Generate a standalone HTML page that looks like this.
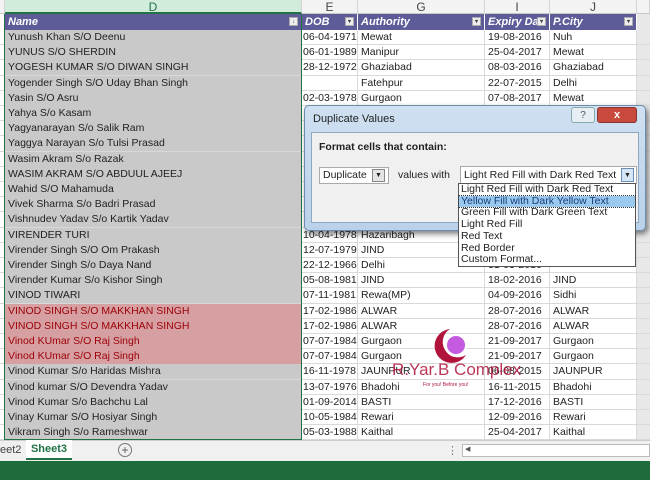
<!DOCTYPE html>
<html><head><meta charset="utf-8"><style>
*{margin:0;padding:0;box-sizing:border-box}
body{width:650px;height:480px;overflow:hidden;background:#fff;font-family:"Liberation Sans",sans-serif;font-size:10.5px;color:#222;position:relative}
.colh{position:absolute;top:0;height:14px;background:#f3f3f3;border-right:1px solid #d4d4d4;border-bottom:1px solid #c8c8c8;text-align:center;font-size:12px;line-height:14px;color:#444}
.hdr{position:absolute;top:14px;height:16px;background:#5d5c99;color:#fff;font-weight:bold;font-style:italic;font-size:11px;line-height:16px;padding-left:3px;border-right:1px solid #fff}
.dd{position:absolute;top:3px;right:3px;width:9px;height:9px;background:#eee;border:1px solid #aaa;font-size:6px;color:#444;line-height:8px;text-align:center;font-style:normal}
.row{position:absolute;left:0;width:650px;height:15.2px;line-height:15px;border-bottom:1px solid #d9d9d9}
.row div{position:absolute;top:0;height:15px;padding-left:3px;white-space:nowrap;overflow:hidden;border-right:1px solid #d9d9d9}
.d{left:5px;width:297px;background:#c9c9c9}
.red .d{background:#d6a0a3;color:#9c0006}
.e{left:302px;width:56px;padding-left:1px!important}
.g{left:358px;width:127px}
.i{left:485px;width:65px}
.j{left:550px;width:87px}
</style></head><body>
<div class="colh" style="left:0;width:5px"></div>
<div class="colh" style="left:5px;width:297px;background:#d2ecdc;color:#217346;border-bottom:2px solid #217346">D</div>
<div class="colh" style="left:302px;width:56px">E</div>
<div class="colh" style="left:358px;width:127px">G</div>
<div class="colh" style="left:485px;width:65px">I</div>
<div class="colh" style="left:550px;width:87px">J</div>
<div class="colh" style="left:637px;width:13px"></div>
<div class="hdr" style="left:5px;width:297px">Name<span class="dd">↓</span></div>
<div class="hdr" style="left:302px;width:56px">DOB<span class="dd">▾</span></div>
<div class="hdr" style="left:358px;width:127px">Authority<span class="dd">▾</span></div>
<div class="hdr" style="left:485px;width:65px">Expiry Da<span class="dd">▾</span></div>
<div class="hdr" style="left:550px;width:87px">P.City<span class="dd">▾</span></div>
<div style="position:absolute;left:637px;top:14px;width:13px;height:426px;background:#e8e8e8"></div>

<div class="row" style="top:30px"><div class="d">Yunush Khan S/O Deenu</div><div class="e">06-04-1971</div><div class="g">Mewat</div><div class="i">19-08-2016</div><div class="j">Nuh</div></div>
<div class="row" style="top:45.2px"><div class="d">YUNUS S/O SHERDIN</div><div class="e">06-01-1989</div><div class="g">Manipur</div><div class="i">25-04-2017</div><div class="j">Mewat</div></div>
<div class="row" style="top:60.4px"><div class="d">YOGESH KUMAR S/O DIWAN SINGH</div><div class="e">28-12-1972</div><div class="g">Ghaziabad</div><div class="i">08-03-2016</div><div class="j">Ghaziabad</div></div>
<div class="row" style="top:75.6px"><div class="d">Yogender Singh S/O Uday Bhan Singh</div><div class="e"></div><div class="g">Fatehpur</div><div class="i">22-07-2015</div><div class="j">Delhi</div></div>
<div class="row" style="top:90.8px"><div class="d">Yasin S/O Asru</div><div class="e">02-03-1978</div><div class="g">Gurgaon</div><div class="i">07-08-2017</div><div class="j">Mewat</div></div>
<div class="row" style="top:106px"><div class="d">Yahya S/o Kasam</div><div class="e"></div><div class="g"></div><div class="i"></div><div class="j"></div></div>
<div class="row" style="top:121.2px"><div class="d">Yagyanarayan S/o Salik Ram</div><div class="e"></div><div class="g"></div><div class="i"></div><div class="j"></div></div>
<div class="row" style="top:136.4px"><div class="d">Yaggya Narayan S/o Tulsi Prasad</div><div class="e"></div><div class="g"></div><div class="i"></div><div class="j"></div></div>
<div class="row" style="top:151.6px"><div class="d">Wasim Akram S/o Razak</div><div class="e"></div><div class="g"></div><div class="i"></div><div class="j"></div></div>
<div class="row" style="top:166.8px"><div class="d">WASIM AKRAM S/O ABDUUL AJEEJ</div><div class="e"></div><div class="g"></div><div class="i"></div><div class="j"></div></div>
<div class="row" style="top:182px"><div class="d">Wahid S/O Mahamuda</div><div class="e"></div><div class="g"></div><div class="i"></div><div class="j"></div></div>
<div class="row" style="top:197.2px"><div class="d">Vivek Sharma S/o Badri Prasad</div><div class="e"></div><div class="g"></div><div class="i"></div><div class="j"></div></div>
<div class="row" style="top:212.4px"><div class="d">Vishnudev Yadav S/o Kartik Yadav</div><div class="e"></div><div class="g"></div><div class="i"></div><div class="j"></div></div>
<div class="row" style="top:227.6px"><div class="d">VIRENDER TURI</div><div class="e">10-04-1978</div><div class="g">Hazaribagh</div><div class="i"></div><div class="j"></div></div>
<div class="row" style="top:242.8px"><div class="d">Virender Singh S/O Om Prakash</div><div class="e">12-07-1979</div><div class="g">JIND</div><div class="i"></div><div class="j"></div></div>
<div class="row" style="top:258px"><div class="d">Virender Singh S/o Daya Nand</div><div class="e">22-12-1966</div><div class="g">Delhi</div><div class="i">31-03-2016</div><div class="j"></div></div>
<div class="row" style="top:273.2px"><div class="d">Virender Kumar S/o Kishor Singh</div><div class="e">05-08-1981</div><div class="g">JIND</div><div class="i">18-02-2016</div><div class="j">JIND</div></div>
<div class="row" style="top:288.4px"><div class="d">VINOD TIWARI</div><div class="e">07-11-1981</div><div class="g">Rewa(MP)</div><div class="i">04-09-2016</div><div class="j">Sidhi</div></div>
<div class="row red" style="top:303.6px"><div class="d">VINOD SINGH S/O MAKKHAN SINGH</div><div class="e">17-02-1986</div><div class="g">ALWAR</div><div class="i">28-07-2016</div><div class="j">ALWAR</div></div>
<div class="row red" style="top:318.8px"><div class="d">VINOD SINGH S/O MAKKHAN SINGH</div><div class="e">17-02-1986</div><div class="g">ALWAR</div><div class="i">28-07-2016</div><div class="j">ALWAR</div></div>
<div class="row red" style="top:334px"><div class="d">Vinod KUmar S/O Raj Singh</div><div class="e">07-07-1984</div><div class="g">Gurgaon</div><div class="i">21-09-2017</div><div class="j">Gurgaon</div></div>
<div class="row red" style="top:349.2px"><div class="d">Vinod KUmar S/O Raj Singh</div><div class="e">07-07-1984</div><div class="g">Gurgaon</div><div class="i">21-09-2017</div><div class="j">Gurgaon</div></div>
<div class="row" style="top:364.4px"><div class="d">Vinod Kumar S/o Haridas Mishra</div><div class="e">16-11-1978</div><div class="g">JAUNPUR</div><div class="i">06-08-2015</div><div class="j">JAUNPUR</div></div>
<div class="row" style="top:379.6px"><div class="d">Vinod kumar S/O Devendra Yadav</div><div class="e">13-07-1976</div><div class="g">Bhadohi</div><div class="i">16-11-2015</div><div class="j">Bhadohi</div></div>
<div class="row" style="top:394.8px"><div class="d">Vinod Kumar S/o Bachchu Lal</div><div class="e">01-09-2014</div><div class="g">BASTI</div><div class="i">17-12-2016</div><div class="j">BASTI</div></div>
<div class="row" style="top:410px"><div class="d">Vinay Kumar S/O Hosiyar Singh</div><div class="e">10-05-1984</div><div class="g">Rewari</div><div class="i">12-09-2016</div><div class="j">Rewari</div></div>
<div class="row" style="top:425.2px"><div class="d">Vikram Singh S/o Rameshwar</div><div class="e">05-03-1988</div><div class="g">Kaithal</div><div class="i">25-04-2017</div><div class="j">Kaithal</div></div>

<div style="position:absolute;left:4px;top:14px;width:298px;height:426px;border:1.5px solid #217346;border-top:none"></div>

<!-- logo -->
<svg style="position:absolute;left:430px;top:327px" width="44" height="38" viewBox="0 0 44 38">
<path d="M20 2 A17 17 0 1 0 36 28 A14 14 0 1 1 20 2Z" fill="#b0143a"/>
<circle cx="26" cy="18" r="9" fill="#c45be0"/>
<path d="M16 18 A10 10 0 0 0 36 20" stroke="#fff" stroke-width="2" fill="none"/>
</svg>
<div style="position:absolute;left:392px;top:360px;font-size:17px;color:#b0143a;opacity:.85">R.Yar.B Complex</div>
<div style="position:absolute;left:423px;top:382px;font-size:5px;color:#b0143a">For you! Before you!</div>

<!-- dialog -->
<div style="position:absolute;left:304px;top:105px;width:342px;height:126px;background:linear-gradient(#cfe0f1,#b9d1ea);border:1px solid #6d8cad;border-radius:5px;box-shadow:2px 3px 6px rgba(0,0,0,.5)">
 <div style="position:absolute;left:8px;top:7px;font-size:11px;color:#222">Duplicate Values</div>
 <div style="position:absolute;left:266px;top:1px;width:24px;height:16px;border:1px solid #8aa;border-radius:3px;background:#e8eef5;text-align:center;font-size:10px;line-height:15px;color:#555">?</div>
 <div style="position:absolute;left:292px;top:1px;width:40px;height:16px;border:1px solid #833;border-radius:3px;background:#c74a3c;text-align:center;font-size:11px;line-height:15px;color:#fff;font-weight:bold">x</div>
 <div style="position:absolute;left:6px;top:26px;width:328px;height:91px;background:#f0f0f0;border:1px solid #8ea8c2">
  <div style="position:absolute;left:7px;top:8px;font-size:10.5px;font-weight:bold">Format cells that contain:</div>
  <div style="position:absolute;left:7px;top:34px;width:70px;height:17px;background:#fff;border:1px solid #aaa;font-size:10.5px;line-height:15px;padding-left:3px">Duplicate<span style="position:absolute;right:3px;top:1px;width:13px;height:13px;border:1px solid #888;background:#e4e4e4;font-size:7px;text-align:center;line-height:12px">▼</span></div>
  <div style="position:absolute;left:86px;top:36px;font-size:10.5px">values with</div>
  <div style="position:absolute;left:148px;top:33px;width:177px;height:18px;background:#fff;border:1px solid #aaa;font-size:10.5px;line-height:16px;padding-left:3px">Light Red Fill with Dark Red Text<span style="position:absolute;right:2px;top:1px;width:13px;height:14px;border:1px solid #6c8fb5;background:#d5e5f5;font-size:7px;text-align:center;line-height:13px">▼</span></div>
 </div>
</div>
<div style="position:absolute;left:458px;top:183px;width:178px;height:84px;background:#fff;border:1px solid #555;font-size:10.5px;line-height:11.7px">
 <div style="padding-left:2px">Light Red Fill with Dark Red Text</div>
 <div style="padding-left:2px;background:#99c9ef;color:#1a3c78;outline:1px dotted #333">Yellow Fill with Dark Yellow Text</div>
 <div style="padding-left:2px">Green Fill with Dark Green Text</div>
 <div style="padding-left:2px">Light Red Fill</div>
 <div style="padding-left:2px">Red Text</div>
 <div style="padding-left:2px">Red Border</div>
 <div style="padding-left:2px">Custom Format...</div>
</div>

<!-- tabs -->
<div style="position:absolute;left:0;top:440px;width:650px;height:21px;background:#f0f0f0;border-top:1px solid #ccc">
 <div style="position:absolute;left:0;top:3px;font-size:11px;color:#444">eet2</div>
 <div style="position:absolute;left:26px;top:-1px;width:46px;height:20px;background:#fff;border-bottom:2px solid #217346;text-align:center;font-size:11px;font-weight:bold;color:#217346;line-height:19px">Sheet3</div>
 <div style="position:absolute;left:118px;top:2px;width:14px;height:14px;border:1px solid #777;border-radius:50%;text-align:center;font-size:12px;line-height:12px;color:#555">+</div>
 <div style="position:absolute;left:447px;top:3px;font-size:11px;color:#777">⋮</div>
 <div style="position:absolute;left:462px;top:3px;width:188px;height:13px;background:#fff;border:1px solid #bbb"><span style="position:absolute;left:2px;top:0;font-size:7px;color:#555">◀</span></div>
</div>
<div style="position:absolute;left:0;top:461px;width:650px;height:19px;background:#1e6b3c"></div>
</body></html>
